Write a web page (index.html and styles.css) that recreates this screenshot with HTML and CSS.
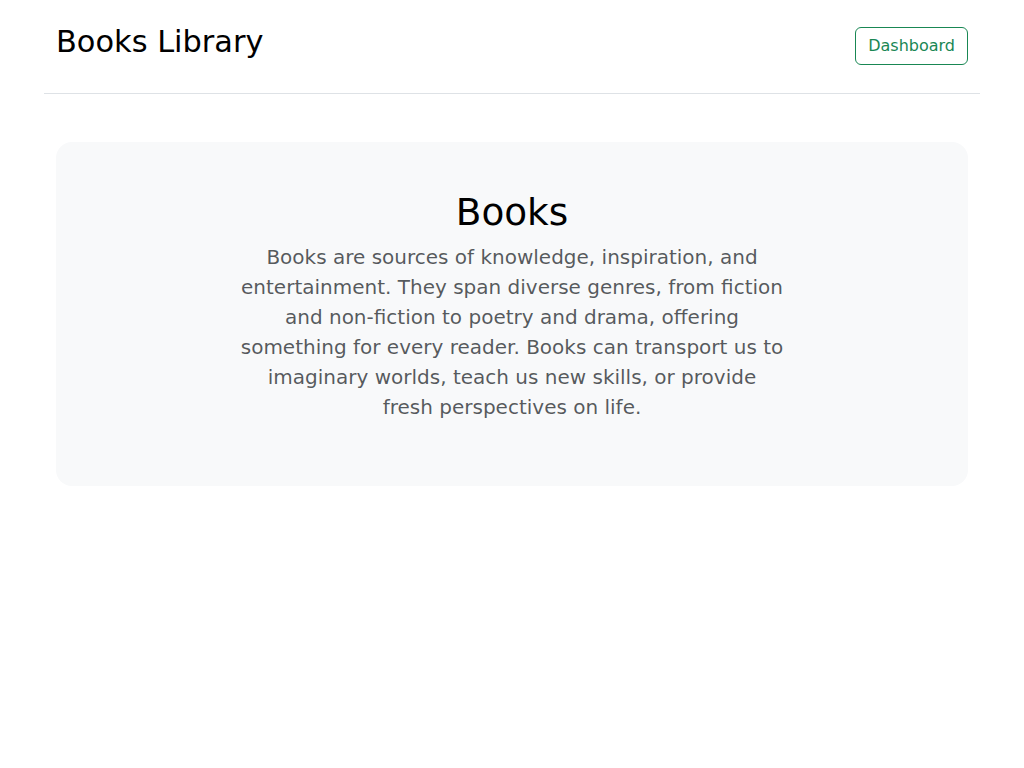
FILE: index.html
```html
<!DOCTYPE html>
<html lang="en">
<head>
<meta charset="utf-8">
<title>Books Library</title>
<link rel="stylesheet" href="styles.css">
</head>
<body>
<div class="container">
  <header class="site-header">
    <h2 class="site-title">Books Library</h2>
    <a class="btn-outline" href="#">Dashboard</a>
  </header>
  <main class="hero">
    <h1 class="hero-title">Books</h1>
    <p class="lead">Books are sources of knowledge, inspiration, and entertainment. They span diverse genres, from fiction and non-fiction to poetry and drama, offering something for every reader. Books can transport us to imaginary worlds, teach us new skills, or provide fresh perspectives on life.</p>
  </main>
</div>
</body>
</html>
```

FILE: styles.css
```css
* { box-sizing: border-box; }
html, body {
  margin: 0;
  padding: 0;
  background: #fff;
  font-family: "DejaVu Sans", sans-serif;
  color: #212529;
}
.container {
  width: 936px;
  margin: 0 auto;
}
.site-header {
  display: flex;
  justify-content: space-between;
  align-items: center;
  padding: 24px 12px 25px;
  border-bottom: 1px solid #dee2e6;
}
.site-title {
  margin: 0 0 8px 0;
  font-size: 30.4px;
  font-weight: 400;
  line-height: 1.2;
  color: #000;
}
.btn-outline {
  display: inline-block;
  padding: 6px 12px;
  font-size: 16px;
  line-height: 24px;
  color: #198754;
  border: 1px solid #198754;
  border-radius: 6px;
  text-decoration: none;
}
.hero {
  margin: 48px 12px 0;
  padding: 48px;
  background: #f8f9fa;
  border-radius: 16px;
  text-align: center;
}
.hero-title {
  margin: 0 0 7px;
  font-size: 37.36px;
  font-weight: 400;
  line-height: 1.2;
  color: #000;
}
.lead {
  max-width: 544px;
  margin: 0 auto 16px;
  font-size: 20px;
  line-height: 30px;
  color: rgba(33, 37, 41, 0.75);
}
```
